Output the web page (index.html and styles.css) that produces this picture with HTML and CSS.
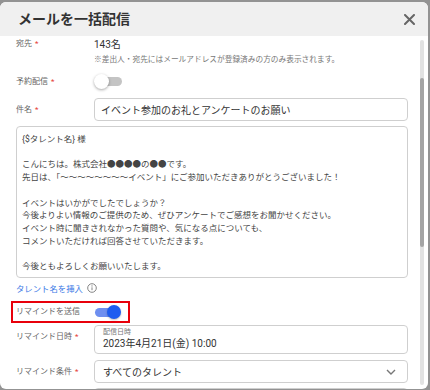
FILE: index.html
```html
<!DOCTYPE html>
<html lang="ja">
<head>
    <meta charset="UTF-8">
    <title>メールを一括配信</title>
    <link rel="stylesheet" href="styles.css">
</head>
<body>

<div class="dialog">
    <div class="dialog-header">
        <h1>メールを一括配信</h1>
        <svg class="close-icon" width="11" height="11" viewBox="0 0 11 11">
            <path d="M1 1 L10 10 M10 1 L1 10" stroke="#666" stroke-width="2" stroke-linecap="round"/>
        </svg>
    </div>

    <div class="dialog-main">
        <div class="dialog-content">
            <div class="row row-top">
                <span class="label">宛先<i>*</i></span>
                <div>
                    <div class="value">143名</div>
                    <div class="note">※差出人・宛先にはメールアドレスが登録済みの方のみ表示されます。</div>
                </div>
            </div>

            <div class="row row-toggle">
                <span class="label">予約配信<i>*</i></span>
                <span class="switch"></span>
            </div>

            <div class="row row-subject">
                <span class="label">件名<i>*</i></span>
                <div class="field">イベント参加のお礼とアンケートのお願い</div>
            </div>

            <div class="body-field">{$タレント名} 様

こんにちは。株式会社●●●●の●●です。
先日は、「〜〜〜〜〜〜〜〜イベント」にご参加いただきありがとうございました！

イベントはいかがでしたでしょうか？
今後よりよい情報のご提供のため、ぜひアンケートでご感想をお聞かせください。
イベント時に聞きされなかった質問や、気になる点についても、
コメントいただければ回答させていただきます。

今後ともよろしくお願いいたします。</div>

            <div class="insert-link">
                <span>タレント名を挿入</span>
                <svg width="10" height="10" viewBox="0 0 10 10">
                    <circle cx="5" cy="5" r="4.3" fill="none" stroke="#777" stroke-width="0.9"/>
                    <path d="M5 4.3 V7.2" stroke="#777" stroke-width="0.9"/>
                    <circle cx="5" cy="2.9" r="0.6" fill="#777"/>
                </svg>
            </div>

            <div class="highlight">
                <span class="label">リマインドを送信</span>
                <span class="switch on"></span>
            </div>

            <div class="row row-date">
                <span class="label">リマインド日時<i>*</i></span>
                <div class="field date-field">
                    <div class="date-caption">配信日時</div>
                    <div class="date-value">2023年4月21日(金) 10:00</div>
                </div>
            </div>

            <div class="row row-select">
                <span class="label">リマインド条件<i>*</i></span>
                <div class="field select-field">
                    <span>すべてのタレント</span>
                    <svg width="10" height="6" viewBox="0 0 10 6">
                        <path d="M1 1 L5 5 L9 1" fill="none" stroke="#777" stroke-width="1.4"/>
                    </svg>
                </div>
            </div>

            <div class="row row-next">
                <span class="label"></span>
                <div class="field"></div>
            </div>
        </div>

        <div class="scrollbar">
            <div class="scrollbar-thumb"></div>
        </div>
    </div>
</div>

</body>
</html>
```

FILE: styles.css
```css
body {
    margin: 0;
    background-color: #939393;
    font-family: Roboto, "Noto Sans CJK JP", sans-serif;
    color: #333;
    overflow: hidden;
}
.dialog {
    width: 428px;
    height: 387px;
    margin-top: 2px;
    background: white;
    border-radius: 6px;
    overflow: hidden;
    display: flex;
    flex-direction: column;
}
.dialog-header {
    height: 34px;
    flex: none;
    background: #f0f0f0;
    display: flex;
    align-items: center;
    justify-content: space-between;
    padding: 0 13px 0 18px;
}
.dialog-header h1 {
    margin: 0;
    font-size: 14px;
    font-weight: 700;
    color: #333;
    line-height: 18px;
}
.close-icon {
    margin-top: 1px;
}
.dialog-main {
    flex: 1;
    display: flex;
    min-height: 0;
}
.dialog-content {
    width: 392px;
    padding-left: 16px;
    overflow: hidden;
}
.scrollbar {
    width: 4px;
    margin: 4px 0 4px 12px;
    background: #e2e2e2;
    border-radius: 2px;
}
.scrollbar-thumb {
    margin-top: 38px;
    height: 169px;
    background: #a4a4a4;
    border-radius: 2px;
}
.row {
    display: flex;
    align-items: center;
}
.label {
    width: 78px;
    flex: none;
    font-size: 8px;
    line-height: 12px;
    color: #666;
}
.label i {
    font-style: normal;
    color: #e53935;
    margin-left: 3px;
}
.row-top {
    align-items: flex-start;
    margin-top: 2px;
}
.value {
    font-size: 10px;
    line-height: 14px;
}
.note {
    font-size: 7.7px;
    line-height: 11px;
    color: #777;
    margin-top: 2px;
}
.row-toggle {
    margin-top: 8px;
    height: 17px;
}
.switch {
    position: relative;
    display: inline-block;
    width: 28px;
    height: 15px;
}
.switch::before {
    content: "";
    position: absolute;
    left: 7px;
    right: 0;
    top: 3px;
    height: 9px;
    border-radius: 5px;
    background: #c4c4c4;
}
.switch::after {
    content: "";
    position: absolute;
    left: 0;
    top: 0;
    width: 15px;
    height: 15px;
    border-radius: 50%;
    background: white;
    box-shadow: 0 1px 3px rgba(0, 0, 0, 0.35);
}
.switch.on::before {
    left: 2px;
    right: 4px;
    background: #6e8ff0;
}
.switch.on::after {
    left: 14px;
    width: 14px;
    height: 14px;
    background: #1d5cf0;
    box-shadow: 0 1px 2px rgba(0, 0, 0, 0.25);
}
.field {
    flex: 1;
    box-sizing: border-box;
    height: 23px;
    border: 1px solid #cfcfcf;
    border-radius: 4px;
    font-size: 10px;
    color: #333;
}
.row-subject {
    margin-top: 8px;
}
.row-subject .field {
    display: flex;
    align-items: center;
    padding-left: 6px;
}
.body-field {
    box-sizing: border-box;
    height: 152px;
    margin-top: 5px;
    border: 1px solid #cfcfcf;
    border-radius: 4px;
    padding: 6px 5px;
    font-size: 8.5px;
    line-height: 12.7px;
    color: #444;
    white-space: pre-line;
    overflow: hidden;
}
.insert-link {
    display: flex;
    align-items: center;
    gap: 4px;
    margin-top: 4px;
    height: 12px;
    font-size: 8.4px;
    color: #3d7ae6;
}
.highlight {
    box-sizing: border-box;
    width: 119px;
    height: 22px;
    margin: 7px 0 0 -5px;
    border: 2px solid #e8000b;
    padding-left: 3px;
    display: flex;
    align-items: center;
}
.highlight .label {
    width: 77px;
}
.row-date {
    align-items: flex-start;
    margin-top: 2px;
}
.row-date .label {
    padding-top: 6px;
}
.date-field {
    height: 29px;
    padding: 2px 8px 0;
}
.date-caption {
    font-size: 7px;
    line-height: 9px;
    color: #777;
}
.date-value {
    font-size: 10px;
    line-height: 13px;
}
.row-select {
    margin-top: 6px;
}
.select-field {
    display: flex;
    align-items: center;
    justify-content: space-between;
    padding: 0 11px 0 8px;
}
.row-next {
    margin-top: 5px;
}
```
